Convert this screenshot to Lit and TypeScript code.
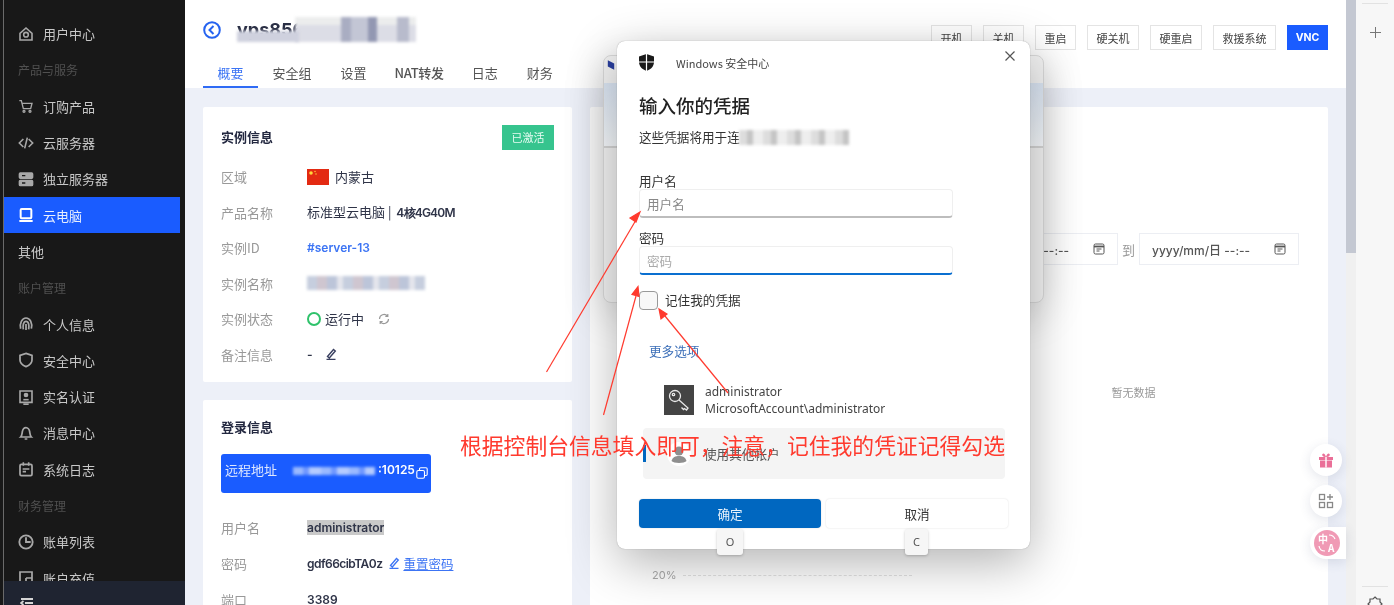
import { LitElement, html, css, svg } from "lit";
import { customElement } from "lit/decorators.js";

const icons: Record<string, unknown> = {
  home: svg`<path d="M3 11l9-8 9 8v10H3z" stroke-width="2.400"/><circle cx="12" cy="13" r="3.500" stroke-width="2.400"/>`,
  cart: svg`<path d="M2 4h3l3 12h11l2-8H6"/><circle cx="9" cy="20" r="1.500"/><circle cx="18" cy="20" r="1.500"/>`,
  code: svg`<path d="M8 6l-6 6 6 6M16 6l6 6-6 6M14 4l-4 16" stroke-width="2.400"/>`,
  server: svg`<rect x="2" y="3" width="20" height="8" rx="1.500" fill="currentColor"/><rect x="2" y="14" width="20" height="8" rx="1.500" fill="currentColor"/><path d="M6 7h5M6 18h5" stroke="#181818"/>`,
  pc: svg`<rect x="4" y="3" width="16" height="14" rx="1.500" stroke-width="3"/><path d="M2 21h20" stroke-width="3"/>`,
  finger: svg`<path d="M4 19c-2-8 2-16 8-16s10 7 8 16M8 20c-1-5 0-12 4-12s5 6 4 12M12 12v9" stroke-width="2.600"/>`,
  shield: svg`<path d="M12 2l9 3v7c0 5-4 8-9 10-5-2-9-5-9-10V5z" stroke-width="2.600"/>`,
  id: svg`<path d="M3 3h18v17H3zM8 23h8" stroke-width="2.400"/><circle cx="12" cy="9" r="2.500" fill="currentColor"/><path d="M8 16h8" stroke-width="2.400"/>`,
  bell: svg`<path d="M4 18c2-2 2-5 2.500-8 .6-3 3-6 5.500-6s5 3 5.500 6c.5 3 .5 6 2.500 8zM10 21h4" stroke-width="2.600"/>`,
  log: svg`<rect x="3" y="5" width="18" height="17" rx="2" stroke-width="2.600"/><path d="M8 2v5M16 2v5M7 12h10M7 16h5" stroke-width="2.400"/>`,
  clock: svg`<circle cx="12" cy="12" r="10" stroke-width="2.800"/><path d="M12 5v7h7" stroke-width="2.800"/>`,
  wallet: svg`<path d="M3 3h18v18H3zM12 12h9M12 12v6h9" stroke-width="2.600"/>`,
};
const ic = (name: string) => html`<svg class="nav-icon" viewBox="0 0 24 24" fill="none" stroke="currentColor" stroke-width="2">${icons[name]}</svg>`;

type Nav = { t: string; i?: string; k?: "group" | "active" };
const nav: Nav[] = [
  { t: "用户中心", i: "home" },
  { t: "产品与服务", k: "group" },
  { t: "订购产品", i: "cart" },
  { t: "云服务器", i: "code" },
  { t: "独立服务器", i: "server" },
  { t: "云电脑", i: "pc", k: "active" },
  { t: "其他" },
  { t: "账户管理", k: "group" },
  { t: "个人信息", i: "finger" },
  { t: "安全中心", i: "shield" },
  { t: "实名认证", i: "id" },
  { t: "消息中心", i: "bell" },
  { t: "系统日志", i: "log" },
  { t: "财务管理", k: "group" },
  { t: "账单列表", i: "clock" },
  { t: "账户充值", i: "wallet" },
];
const tabs = ["概要", "安全组", "设置", "NAT转发", "日志", "财务"];
const actions = ["开机", "关机", "重启", "硬关机", "硬重启", "救援系统"];

const cal = html`<svg class="cal" viewBox="0 0 12 12" fill="none" stroke="#555" stroke-width="1"><rect x="1" y="1" width="10" height="10" rx="1.500"/><path d="M1 3.500h10" stroke-width="1.800"/><path d="M3.500 6h5M3.500 8h3"/></svg>`;

@customElement("app-root")
export class AppRoot extends LitElement {
  static styles = css`
    :host { display: block; width: 1394px; height: 605px; overflow: hidden; position: relative; background: #fff;
      font-family: "Noto Sans CJK SC", "Noto Sans", sans-serif; font-size: 13px; color: #2a2f45; }
    .page { display: flex; width: 1394px; height: 605px; position: relative; filter: blur(0.5px); }
    .sidebar { width: 185px; flex: none; background: #181818; padding-left: 3px; box-sizing: border-box; height: 605px; }
    .side-in { height: 605px; border-left: 1px solid #6a6a6a; display: flex; flex-direction: column; }
    .nav-list { flex: 1; min-height: 0; overflow: hidden; padding-top: 15.500px; }
    .nav-item { height: 36.300px; display: flex; align-items: center; gap: 9px; padding-left: 14px; margin-right: 5px; color: #c8c8c8; font-size: 13px; }
    .nav-item.group { color: #505050; font-size: 12px; }
    .nav-item.active { background: #1a5cff; color: #e8efff; }
    .nav-icon { width: 16px; height: 16px; flex: none; color: #a8a8a8; }
    .active .nav-icon { color: #fff; }
    .side-foot { height: 24px; flex: none; background: #1f2431; padding: 15px 0 0 16px; box-sizing: border-box; overflow: hidden; }
    .side-foot svg { width: 14px; height: 14px; display: block; }

    .main { width: 1161px; flex: none; height: 605px; background: #edf0f8; overflow: hidden; }
    .header { height: 88px; background: #fff; position: relative; display: flex; flex-direction: column; padding: 0 18px; box-sizing: border-box; }
    .head-top { height: 59px; display: flex; justify-content: space-between; padding-top: 17px; box-sizing: border-box; }
    .title-row { display: flex; align-items: center; height: 25px; gap: 16px; }
    .back { width: 18px; height: 18px; margin-top: 1px; }
    .title { font-family: "Inter", sans-serif; font-weight: 700; font-size: 18px; color: #2a2f45; position: relative; width: 180px; height: 25px; line-height: 25px; white-space: nowrap; }
    .smear { position: absolute; filter: blur(1.500px); }
    .title .smear { background-color: #dcdde6; background-image: linear-gradient(90deg, transparent 0 38%, #a9adc2 38% 46%, #c3c6d5 46% 60%, #9297b2 60% 68%, transparent 68% 84%, #b8bbcc 84% 94%, transparent 94%), linear-gradient(#eceded 0 30%, transparent 30%); }
    .title .s1 { left: 58px; top: 0; width: 121px; height: 25px; }
    .title .s2 { left: 0; top: 14px; width: 62px; height: 11px; background-image: none; background-color: #cfd1de; }
    .actions { display: flex; gap: 11px; padding-top: 8px; }
    .btn { height: 25px; padding: 0 8.500px; box-sizing: border-box; border: 1px solid #e4e4e4; font-size: 11px; line-height: 24px; color: #444; background: #fff; }
    .btn.primary { width: 41px; padding: 0; text-align: center; background: #1a5cff; border-color: #1a5cff; color: #fff; font-weight: 700; font-size: 10.500px; font-family: "Inter", sans-serif; }
    .tabs { display: flex; height: 29px; }
    .tab { padding: 0 14.500px; font-size: 13px; line-height: 28px; color: #555; box-sizing: border-box; height: 29px; }
    .tab.on { color: #3c74f4; border-bottom: 2px solid #2f6bf5; }
    .tab.nat { letter-spacing: -.3px; font-weight: 500; padding-right: 13.500px; padding-left: 13.500px; }
    .content { display: grid; grid-template-columns: 369px 738px; gap: 18px; padding: 19px 18px 0; align-items: start; }
    .col { display: flex; flex-direction: column; gap: 18px; }
    .card { background: #fff; box-sizing: border-box; padding: 18px; border-radius: 2px; }
    .card-a { height: 275px; padding-bottom: 9px; }
    .card-head { display: flex; justify-content: space-between; align-items: center; height: 25px; margin-bottom: 9px; }
    .card-title { font-weight: 700; font-size: 13px; color: #232840; line-height: 18px; }
    .card-head .card-title { padding-bottom: 1px; }
    .badge { background: #36c48e; color: #e6fbf2; width: 52px; height: 25px; font-size: 11px; text-align: center; line-height: 25px; }
    .row { display: flex; align-items: center; height: 35.500px; }
    .card-b .row { height: 36px; }
    .k { width: 86px; flex: none; color: #999; }
    .v { display: flex; align-items: center; gap: 6px; color: #2f3448; position: relative; white-space: nowrap; }
    .lat { font-family: "Inter", sans-serif; font-weight: 600; font-size: 12px; }
    .tight { letter-spacing: -.55px; }
    .spec { letter-spacing: -.8px; margin-left: 2px; }
    .link { color: #3c74f4; }
    .flag { width: 22px; height: 16px; }
    .dot { width: 10px; height: 10px; border: 2px solid #2fc26b; border-radius: 50%; margin-right: -2px; }
    .mini { width: 12px; height: 12px; }
    .ml8 { margin-left: 8px; }
    .ml6 { margin-left: 6px; }
    .name-smear { width: 118px; height: 14px; position: relative; }
    .name-smear .smear { inset: 0; background-image: repeating-linear-gradient(90deg, #c6cede 0 10px, #cfc6d0 10px 20px, #bcc5d9 20px 30px, #e4e5ec 30px 36px); }
    .card-b { padding-bottom: 0; height: 300px; }
    .remote { background: #1a5cff; border-radius: 3px; height: 39px; width: 210px; margin: 18px 0 16px; color: #dfe8ff; display: flex; align-items: center; padding: 0 0 8px 4px; box-sizing: border-box; position: relative; font-size: 13px; }
    .remote .smear { left: 72px; top: 13px; width: 82px; height: 8px; background-image: repeating-linear-gradient(90deg, #9ab9ff 0 10px, #6f97ff 10px 16px, #b5cbff 16px 28px); }
    .port { position: absolute; left: 157px; top: 8px; color: #fff; font-family: "Inter", sans-serif; font-size: 12px; font-weight: 600; }
    .copy { position: absolute; right: 3px; top: 13px; width: 12px; height: 12px; }
    .sel { background: #c9c9c9; }
    .reset { display: flex; align-items: center; gap: 3px; text-decoration: underline; font-size: 12.500px; }
    .card-r { height: 520px; padding: 126px 29px 0 0; position: relative; }
    .dates { display: flex; justify-content: flex-end; align-items: center; gap: 4px; color: #999; }
    .date { width: 160px; height: 32px; border: 1px solid #eceef3; box-sizing: border-box; display: flex; align-items: center; justify-content: space-between; padding: 0 12px; color: #555; font-family: "Inter", "Noto Sans CJK SC", sans-serif; font-size: 12px; font-weight: 500; }
    .cal { width: 12px; height: 12px; }
    .empty { text-align: center; margin: 119px 0 0; padding-left: 378px; color: #999; font-size: 11px; line-height: 16px; }
    .axis { display: flex; align-items: center; gap: 7px; margin: 168px 0 0 62px; color: #aaa; font-family: "Inter", sans-serif; font-size: 11px; }
    .axis i { width: 229px; border-top: 1px dashed #e2e2e2; }

    .scroll { width: 10px; flex: none; background: #f0f0f0; }
    .thumb { height: 253px; background: #c4c8d2; }
    .strip { flex: 1; background: #f7f7f7; display: flex; flex-direction: column; align-items: center; padding-top: 3px; box-sizing: border-box; }
    .strip hr { width: 26px; border: none; border-top: 1px solid #e2e2e2; margin: 0; }
    .plus { width: 13px; height: 13px; margin: 22px 0 0; }
    .strip .low { margin-top: auto; }
    .gear { width: 16px; height: 16px; margin: 9px 0 -7px; }

    .fab { position: absolute; left: 1310px; width: 32px; height: 32px; border-radius: 50%; background: #fff; box-shadow: 0 3px 12px rgba(60,70,110,.14); display: flex; align-items: center; justify-content: center; }
    .fab svg { width: 16px; height: 16px; }
    .f1 { top: 444px; } .f2 { top: 485px; }
    .f3 { top: 527px; width: 36px; border-radius: 16px 0 0 16px; justify-content: flex-start; padding-left: 4px; box-sizing: border-box; }
    .f3 svg { width: 26px; height: 26px; }
    .f3 text { font-size: 10px; font-weight: 700; fill: #fff; font-family: "Noto Sans CJK SC", sans-serif; }

    .back-dlg { position: absolute; left: 603px; top: 55px; width: 441px; height: 248px; border-radius: 8px; background: #f3f3f3; border: 1px solid #d9d9d9; box-sizing: border-box; box-shadow: 0 10px 40px rgba(0,0,0,.18); overflow: hidden; display: flex; flex-direction: column; }
    .bd-top { height: 27px; flex: none; padding: 3px 0 0 3px; box-sizing: border-box; }
    .bd-top svg { width: 8px; height: 12px; display: block; }
    .bd-band { height: 63px; flex: none; background: linear-gradient(#dbe6f4, #f6f9fc); border-bottom: 2px solid #d5d5d5; }
    .dlg { position: absolute; left: 617px; top: 41px; width: 413px; height: 508px; background: #fff; border-radius: 8px; box-shadow: 0 0 1px rgba(0,0,0,.4), 0 14px 50px rgba(0,0,0,.3); padding: 0 22px; box-sizing: border-box; color: #333; }
    .dlg-head { display: flex; align-items: center; height: 44px; gap: 22px; font-size: 11px; color: #444; }
    .dlg-head svg { width: 15px; height: 17px; margin-top: -2px; }
    .close { position: absolute; right: 14px; top: 9px; width: 12px; height: 12px; }
    h1 { font-size: 18.500px; font-weight: 500; margin: 7px 0 0; line-height: 26px; color: #222; }
    .sub { font-size: 12.600px; line-height: 18px; margin-top: 10px; position: relative; height: 18px; }
    .sub .smear { left: 100px; top: 2px; width: 110px; height: 15px; background-image: repeating-linear-gradient(90deg, #ddd 0 8px, #c4c4c4 8px 14px, #eee 14px 24px); }
    .lab { font-size: 12.600px; line-height: 16px; margin-top: 27px; }
    .lab.l2 { margin-top: 12px; }
    .inp { width: 314px; height: 29px; background: #fff; border: 1px solid #efefef; border-bottom: 2px solid #bdbdbd; border-radius: 4px; box-sizing: border-box; padding-left: 7px; color: #888; font-size: 12.600px; line-height: 28px; }
    .inp.p { border-bottom-color: #0a6fd0; color: #aaa; }
    .chk { display: flex; align-items: center; gap: 7px; margin-top: 16px; font-size: 12.600px; height: 19px; }
    .chk span { padding-bottom: 2px; }
    .box { width: 19px; height: 19px; border: 1px solid #999; border-radius: 4px; background: #f8f8f8; box-sizing: border-box; }
    .more { color: #3c6fb8; font-size: 12.600px; line-height: 18px; margin: 32px 0 0 10px; }
    .acct { display: flex; gap: 11px; margin: 23px 0 0 25px; align-items: center; font-size: 12px; line-height: 17px; color: #444; font-family: "Noto Sans", sans-serif; }
    .key { width: 30px; height: 30px; background: #444; flex: none; }
    .other { margin: 11px 0 0 4px; width: 362px; height: 51px; background: #f4f4f4; border-radius: 4px; display: flex; align-items: center; gap: 13px; position: relative; padding-left: 24px; box-sizing: border-box; font-size: 12.600px; color: #555; }
    .other::before { content: ""; position: absolute; left: 0; top: 17px; width: 3px; height: 17px; background: #0067c0; }
    .person { width: 24px; height: 24px; }
    .dbtns { display: flex; gap: 5px; margin-top: 20px; }
    .db { width: 182px; height: 29px; border-radius: 4px; text-align: center; font-size: 12.600px; line-height: 29px; background: #fff; box-shadow: 0 0 2px rgba(0,0,0,.14); }
    .db.ok { background: #0067c0; color: #e8f2fb; }
    .kbd { position: absolute; top: 529px; height: 26px; background: #f6f6f6; border-radius: 3px; box-shadow: 0 1px 3px rgba(0,0,0,.22); text-align: center; line-height: 25px; font-size: 11px; color: #555; font-family: "Noto Sans", sans-serif; }
    .ko { left: 717px; width: 26px; } .kc { left: 905px; width: 23px; }

    .arrows { position: absolute; left: 0; top: 0; width: 1394px; height: 605px; pointer-events: none; }
    .note { position: absolute; left: 460px; top: 429px; font-size: 21.800px; line-height: 32px; color: #ff3a2e; white-space: nowrap; }
  `;

  render() {
    return html`<div class="page">
      <aside class="sidebar"><div class="side-in">
        <div class="nav-list">
          ${nav.map((n) => html`<div class="nav-item ${n.k ?? ""}">${n.i ? ic(n.i) : ""}<span>${n.t}</span></div>`)}
        </div>
        <div class="side-foot"><svg viewBox="0 0 14 14" fill="none" stroke="#d5d5d5" stroke-width="1.800"><path d="M1 3h12M5 7h8M1 11h12M3.500 5L1 7l2.500 2"/></svg></div>
      </div></aside>

      <main class="main">
        <header class="header">
          <div class="head-top">
            <div class="title-row">
              <svg class="back" viewBox="0 0 18 18" fill="none" stroke="#2563f0" stroke-width="2"><circle cx="9" cy="9" r="7.800"/><path d="M10.500 5L6.500 9l4 4"/></svg>
              <div class="title">vps856<span class="smear s1"></span><span class="smear s2"></span></div>
            </div>
            <div class="actions">
              ${actions.map((a) => html`<div class="btn">${a}</div>`)}
              <div class="btn primary">VNC</div>
            </div>
          </div>
          <nav class="tabs">${tabs.map((t, i) => html`<div class="tab ${i === 0 ? "on" : ""} ${i === 3 ? "nat" : ""}">${t}</div>`)}</nav>
        </header>

        <div class="content">
          <div class="col">
            <section class="card card-a">
              <div class="card-head"><div class="card-title">实例信息</div><div class="badge">已激活</div></div>
              <div class="row"><div class="k">区域</div><div class="v">
                <svg class="flag" viewBox="0 0 22 16"><rect width="22" height="16" fill="#e32a12"/><circle cx="4" cy="4" r="1.800" fill="#ffd93b"/><circle cx="8" cy="2.500" r=".7" fill="#ffd93b"/><circle cx="9" cy="5" r=".7" fill="#ffd93b"/></svg>内蒙古</div></div>
              <div class="row"><div class="k">产品名称</div><div class="v"><span>标准型云电脑 | <span class="lat spec">4核4G40M</span></span></div></div>
              <div class="row"><div class="k">实例ID</div><div class="v lat link">#server-13</div></div>
              <div class="row"><div class="k">实例名称</div><div class="v"><div class="name-smear"><span class="smear"></span></div></div></div>
              <div class="row"><div class="k">实例状态</div><div class="v"><i class="dot"></i><span>运行中</span>
                <svg class="mini ml8" viewBox="0 0 12 12" fill="none" stroke="#999" stroke-width="1.200"><path d="M1.500 6a4.500 4.500 0 0 1 8-2.800M10.500 6a4.500 4.500 0 0 1-8 2.800M9.800 1v2.500H7.300M2.200 11V8.500h2.500"/></svg></div></div>
              <div class="row"><div class="k">备注信息</div><div class="v"><span class="lat">-</span>
                <svg class="mini ml6" viewBox="0 0 12 12" fill="none" stroke="#3a4060" stroke-width="1.400"><path d="M2.500 8.500L8.500 1.500l1.800 1.500-6 7zM1.500 11.500h9"/></svg></div></div>
            </section>

            <section class="card card-b">
              <div class="card-title">登录信息</div>
              <div class="remote">远程地址<span class="smear"></span><span class="port">:10125</span>
                <svg class="copy" viewBox="0 0 12 12" fill="none" stroke="#fff" stroke-width="1.100"><rect x=".8" y="3.500" width="7.700" height="7.700" rx="1.500"/><path d="M3.500 3V2a1.200 1.200 0 0 1 1.200-1.200h5.300A1.200 1.200 0 0 1 11.200 2v5.300a1.200 1.200 0 0 1-1.200 1.200H9"/></svg></div>
              <div class="row"><div class="k">用户名</div><div class="v lat sel">administrator</div></div>
              <div class="row"><div class="k">密码</div><div class="v"><span class="lat tight">gdf66cibTA0z</span>
                <span class="link reset"><svg class="mini" viewBox="0 0 12 12" fill="none" stroke="#3c74f4" stroke-width="1.300"><path d="M2.500 8.500L8.500 1.500l1.800 1.500-6 7zM1.500 11.500h9"/></svg>重置密码</span></div></div>
              <div class="row"><div class="k">端口</div><div class="v lat">3389</div></div>
            </section>
          </div>

          <section class="card card-r">
            <div class="dates">
              <div class="date"><span>yyyy/mm/日 --:--</span>${cal}</div>
              <span>到</span>
              <div class="date"><span>yyyy/mm/日 --:--</span>${cal}</div>
            </div>
            <div class="empty">暂无数据</div>
            <div class="axis"><span>20%</span><i></i></div>
          </section>
        </div>
      </main>

      <div class="scroll"><div class="thumb"></div></div>
      <div class="strip">
        <hr />
        <svg class="plus" viewBox="0 0 13 13" stroke="#777" stroke-width="1"><path d="M6.500 1v11M1 6.500h11"/></svg>
        <hr class="low" />
        <svg class="gear" viewBox="0 0 16 16" fill="none" stroke="#555" stroke-width="1.200"><path d="M8 1l2 2 3 0 0 3 2 2-2 2 0 3-3 0-2 2-2-2-3 0 0-3-2-2 2-2 0-3 3 0z"/></svg>
      </div>

      <div class="fab f1"><svg viewBox="0 0 16 16" fill="#ea6f98"><rect x="1" y="5" width="14" height="3"/><rect x="2" y="8.500" width="12" height="7"/><path d="M8 5C5 5 3.500 3.500 4.500 2S7.500 2.500 8 5c.5-2.500 2.500-4.500 3.500-3S11 5 8 5z"/><rect x="7.300" y="5" width="1.400" height="10.500" fill="#fff"/></svg></div>
      <div class="fab f2"><svg viewBox="0 0 16 16" fill="none" stroke="#888" stroke-width="1.300"><rect x="1.500" y="1.500" width="5" height="5"/><rect x="1.500" y="9.500" width="5" height="5"/><rect x="9.500" y="9.500" width="5" height="5"/><path d="M12 1v6M9 4h6"/></svg></div>
      <div class="fab f3"><svg viewBox="0 0 26 26"><circle cx="13" cy="13" r="13" fill="#f09ab5"/><text x="4" y="13">中</text><text x="14" y="22">A</text><path d="M15 5c3 0 5 1.500 6 4M5 16c.5 3 2.500 5 6 5" fill="none" stroke="#fff" stroke-width="1.200"/></svg></div>

      <div class="back-dlg"><div class="bd-top"><svg viewBox="0 0 10 14"><path d="M1 1l8 4v8L1 9z" fill="#2a3f9e"/></svg></div><div class="bd-band"></div></div>

      <div class="dlg">
        <div class="dlg-head">
          <svg viewBox="0 0 15 17"><path d="M7.500 0L15 2.500V8c0 4.500-3.500 7.500-7.500 9C3.500 15.500 0 12.500 0 8V2.500z" fill="#1a1a1a"/><path d="M7.500 0v17M0 8h15" stroke="#fff" stroke-width="1.200"/></svg>
          <span>Windows 安全中心</span>
        </div>
        <svg class="close" viewBox="0 0 12 12" stroke="#555" stroke-width="1.200"><path d="M1.500 1.500l9 9M10.500 1.500l-9 9"/></svg>
        <h1>输入你的凭据</h1>
        <div class="sub">这些凭据将用于连<span class="smear"></span></div>
        <div class="lab">用户名</div>
        <div class="inp">用户名</div>
        <div class="lab l2">密码</div>
        <div class="inp p">密码</div>
        <div class="chk"><div class="box"></div><span>记住我的凭据</span></div>
        <div class="more">更多选项</div>
        <div class="acct">
          <svg class="key" viewBox="0 0 30 30" fill="none" stroke="#e8e8e8" stroke-width="1.300"><rect width="30" height="30" fill="#444" stroke="none"/><circle cx="11" cy="11" r="5.500"/><circle cx="9.500" cy="9.500" r="1.200"/><path d="M15 15l9 8-1.500 2-2-1.500-1 1-2-2"/></svg>
          <div><div>administrator</div><div>MicrosoftAccount\\administrator</div></div>
        </div>
        <div class="other">
          <svg class="person" viewBox="0 0 24 24"><circle cx="12" cy="12" r="12" fill="#fff"/><circle cx="12" cy="9" r="4.500" fill="#8f8f8f"/><path d="M4.500 19c1-4 4-5 7.500-5s6.500 1 7.500 5c-2 2.500-13 2.500-15 0z" fill="#8f8f8f"/></svg>
          <span>使用其他帐户</span>
        </div>
        <div class="dbtns"><div class="db ok">确定</div><div class="db">取消</div></div>
      </div>
      <div class="kbd ko">O</div>
      <div class="kbd kc">C</div>

      <svg class="arrows" viewBox="0 0 1394 605" fill="none" stroke="#ff3a2e" stroke-width="1.200">
        <path d="M546.500 372L636 220"/><path d="M640 212l-10 6 6 4z" fill="#ff3a2e"/>
        <path d="M603.500 415L636 296"/><path d="M638 286.500l-6 8 7 2z" fill="#ff3a2e"/>
        <path d="M728 393L665 316"/><path d="M659 309l2 10 6-5z" fill="#ff3a2e"/>
      </svg>
      <div class="note">根据控制台信息填入即可，注意，记住我的凭证记得勾选</div>
    </div>`;
  }
}
